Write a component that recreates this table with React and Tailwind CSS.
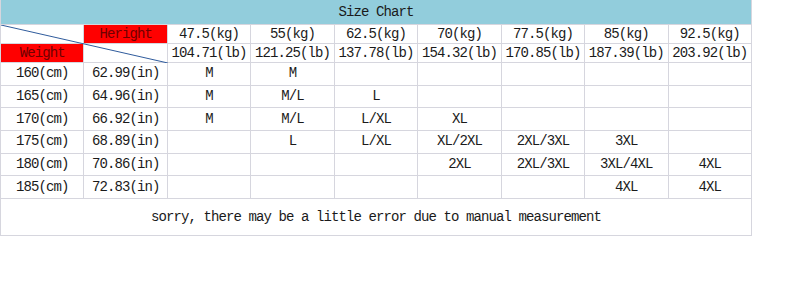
import React from "react";

const weights = ["47.5(kg)", "55(kg)", "62.5(kg)", "70(kg)", "77.5(kg)", "85(kg)", "92.5(kg)"];
const pounds = ["104.71(lb)", "121.25(lb)", "137.78(lb)", "154.32(lb)", "170.85(lb)", "187.39(lb)", "203.92(lb)"];

const rows = [
  ["160(cm)", "62.99(in)", "M", "M", "", "", "", "", ""],
  ["165(cm)", "64.96(in)", "M", "M/L", "L", "", "", "", ""],
  ["170(cm)", "66.92(in)", "M", "M/L", "L/XL", "XL", "", "", ""],
  ["175(cm)", "68.89(in)", "", "L", "L/XL", "XL/2XL", "2XL/3XL", "3XL", ""],
  ["180(cm)", "70.86(in)", "", "", "", "2XL", "2XL/3XL", "3XL/4XL", "4XL"],
  ["185(cm)", "72.83(in)", "", "", "", "", "", "4XL", "4XL"],
];

const cell = "flex items-center justify-center border-r border-b border-[#d6d6de] whitespace-nowrap";

export default function App() {
  return (
    <div className="w-[789px] h-[300px] bg-white text-[#1a1a1a] text-[14px] tracking-[-0.9px] font-['Liberation_Mono',monospace]">
      <div className="w-[752px] border-l border-[#d6d6de] grid grid-cols-9">
        {/* title */}
        <div className="col-span-9 h-[25px] bg-[#92cddc] flex items-center justify-center border-r border-b border-[#d6d6de]">
          Size Chart
        </div>

        {/* corner block with diagonal */}
        <div className="col-span-2 row-span-2 relative grid grid-cols-2 grid-rows-[19px_19px]">
          <div className="border-r border-b border-[#d6d6de]" />
          <div className="bg-[#ff0000] text-[#6e0000] flex items-center justify-center border-r border-b border-[#d6d6de]">
            Heright
          </div>
          <div className="bg-[#ff0000] text-[#6e0000] flex items-center justify-center border-r border-b border-[#d6d6de]">
            Weight
          </div>
          <div className="border-r border-b border-[#d6d6de]" />
          <svg className="absolute inset-0 w-full h-full pointer-events-none" viewBox="0 0 167 38" preserveAspectRatio="none">
            <line x1="0" y1="0" x2="167" y2="38" stroke="#2e5a9c" strokeWidth="1" />
          </svg>
        </div>

        {weights.map((w) => (
          <div key={w} className={`${cell} h-[19px]`}>
            {w}
          </div>
        ))}
        {pounds.map((p) => (
          <div key={p} className={`${cell} h-[19px]`}>
            {p}
          </div>
        ))}

        {rows.map((r) =>
          r.map((v, i) => (
            <div key={r[0] + i} className={`${cell} h-[22.7px]`}>
              {v}
            </div>
          ))
        )}

        {/* footer note */}
        <div className="col-span-9 h-[37px] flex items-center justify-center border-r border-b border-[#d6d6de]">
          sorry, there may be a little error due to manual measurement
        </div>
      </div>
    </div>
  );
}
